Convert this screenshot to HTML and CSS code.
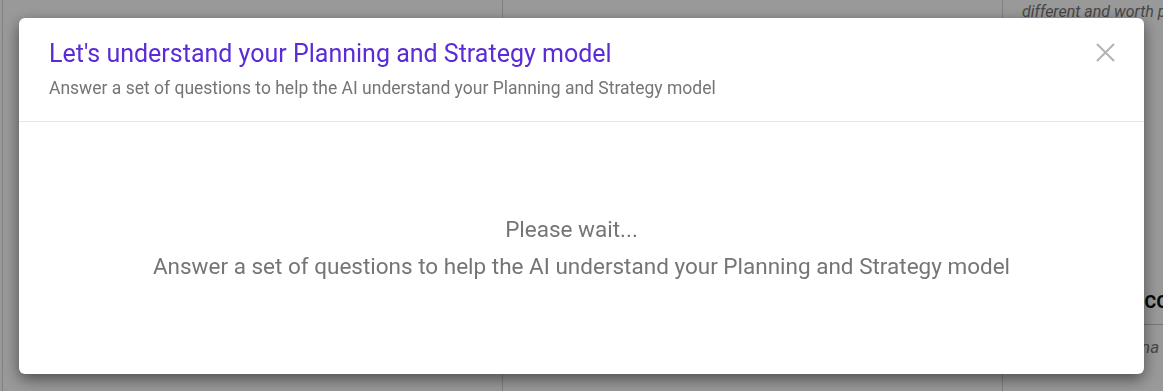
FILE: index.html
```html
<!DOCTYPE html>
<html>
<head>
    <title>Planning and Strategy model</title>
    <link rel="stylesheet" href="styles.css">
</head>
<body>
    <div class="page">
        <div class="column"></div>
        <div class="column"></div>
        <div class="column">
            <p class="note note-top">different and worth paying</p>
            <div class="spacer"></div>
            <h3 class="section-title">Acc</h3>
            <p class="note note-bottom">Fina</p>
        </div>
    </div>

    <div class="overlay">
        <div class="modal">
            <div class="modal-header">
                <div>
                    <h2 class="modal-title">Let's understand your Planning and Strategy model</h2>
                    <p class="modal-subtitle">Answer a set of questions to help the AI understand your Planning and Strategy model</p>
                </div>
                <button class="close" aria-label="Close">
                    <svg width="19" height="19" viewBox="0 0 19 19">
                        <path d="M1 1 L18 18 M18 1 L1 18" stroke="currentColor" stroke-width="2" fill="none"/>
                    </svg>
                </button>
            </div>
            <div class="modal-body">
                <p class="wait">Please wait...</p>
                <p>Answer a set of questions to help the AI understand your Planning and Strategy model</p>
            </div>
        </div>
    </div>
</body>
</html>
```

FILE: styles.css
```css
body {
    margin: 0;
    font-family: Roboto, "Liberation Sans", sans-serif;
    background: #fff;
    overflow: hidden;
}

.page {
    display: grid;
    grid-template-columns: 500px 500px 1fr;
    height: 391px;
    margin-left: 2px;
}

.column {
    border-left: 1px solid #d6d6d6;
    display: flex;
    flex-direction: column;
    padding-left: 19px;
    overflow: hidden;
}

.note {
    margin: 0;
    font-style: italic;
    font-size: 17px;
    line-height: 20px;
    color: #777;
    white-space: nowrap;
}

.note-top {
    margin-top: 2px;
    font-size: 16px;
}

.spacer {
    height: 265px;
}

.section-title {
    margin: 0 0 0 107px;
    font-size: 23px;
    font-weight: 500;
    line-height: 28px;
    color: #0d0d14;
    padding-bottom: 9px;
    border-bottom: 1px solid #c4c4c4;
    white-space: nowrap;
}

.note-bottom {
    margin-top: 12px;
    margin-left: 106px;
}

.overlay {
    position: fixed;
    inset: 0;
    background: rgba(0, 0, 0, 0.4);
    display: flex;
    align-items: center;
    justify-content: center;
}

.modal {
    width: 1125px;
    height: 356px;
    background: #fff;
    border-radius: 6px;
    box-shadow: 0 5px 15px rgba(0, 0, 0, 0.5);
    display: flex;
    flex-direction: column;
}

.modal-header {
    display: flex;
    justify-content: space-between;
    align-items: flex-start;
    padding: 21px 29px 0 30px;
    height: 82px;
    border-bottom: 1px solid #e5e5e5;
}

.modal-title {
    margin: 0;
    font-size: 25px;
    font-weight: 400;
    line-height: 30px;
    color: #5b2bd6;
}

.modal-subtitle {
    margin: 9px 0 0;
    font-size: 17.5px;
    line-height: 20px;
    color: #757575;
}

.close {
    border: 0;
    background: none;
    padding: 0;
    margin-top: 4px;
    color: #b3b3b3;
    cursor: pointer;
}

.modal-body {
    flex: 1;
    display: flex;
    flex-direction: column;
    align-items: center;
    justify-content: center;
    gap: 10px;
}

.modal-body p {
    margin: 0;
    font-size: 22.5px;
    line-height: 27px;
    color: #757575;
}

.modal-body .wait {
    padding-right: 20px;
}
```
